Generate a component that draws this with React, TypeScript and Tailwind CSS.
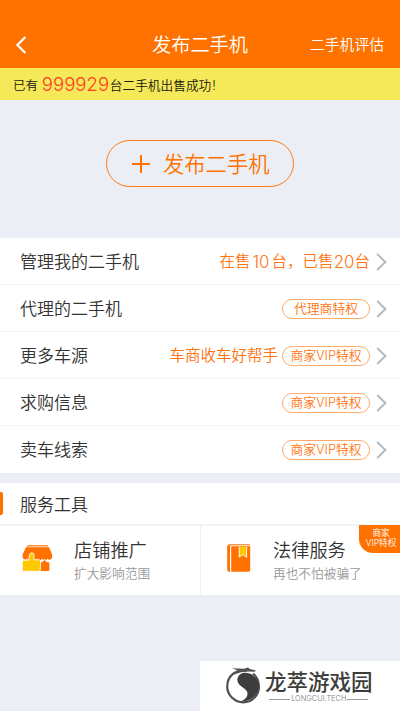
import React from "react";

const sans = "font-['Inter','Noto_Sans_CJK_SC',sans-serif]";
const cjk = "font-['Noto_Sans_CJK_SC',sans-serif]";

function Chevron() {
  return (
    <svg className="mt-px ml-[6px] h-[18px] w-[12px] shrink-0" viewBox="0 0 12 18" fill="none" stroke="#b9b9b9" strokeWidth="2">
      <path d="M1.2 1 L9.4 9 L1.2 17" />
    </svg>
  );
}

function Pill({ children }: { children: React.ReactNode }) {
  return (
    <span className="mt-px flex h-5 w-[88px] shrink-0 items-center justify-center rounded-full border border-[#ffab6b] text-[12.8px] leading-none whitespace-nowrap text-[#ff7410]">
      <span className="pt-[2px]">{children}</span>
    </span>
  );
}

function Row({ label, last, children }: { label: string; last?: boolean; children: React.ReactNode }) {
  return (
    <div className={`flex h-[47px] items-center border-b pr-3 pl-5 ${last ? "border-white" : "border-[#f5f5f7]"}`}>
      <span className="flex-1 pt-[2px] text-[17px] leading-6 text-[#333]">{label}</span>
      {children}
      <Chevron />
    </div>
  );
}

function ShopIcon() {
  return (
    <svg className="h-[27px] w-[31px]" viewBox="0 0 31 27">
      <path d="M4.6 1.4 Q5 .2 6.2 .2 H24.8 Q26 .2 26.4 1.4 Z" fill="#ff7200" />
      <path d="M4 2.2 H27 L30.2 9.5 V12.4 Q28.5 16.5 25.5 13.8 Q22.8 17 20 13.8 Q17.5 17 15.2 13.8 Q12.5 17 10 13.8 Q7.5 17 5 13.8 Q2.3 16 .6 12.4 V9.5 Z" fill="#ff7200" />
      <path d="M17.8 26 V17.6 Q20.5 17.5 22.5 15 Q24.5 17.5 27.4 17.5 V25 Q27.4 26 26.4 26 Z" fill="#ff7200" />
      <path d="M17.8 16.6 Q20.8 16.8 22.6 14.4 Q24.4 16.8 27.4 16.6" fill="none" stroke="#fff" strokeWidth=".8" />
      <path d="M.3 16.2 Q.3 15.2 1.4 15.2 H6.6 L7.4 10.4 Q8 7.8 9.8 7.8 Q12.2 8 12.2 10.6 L11.8 14.8 H17.4 Q18.7 15 18.6 16.4 L18.2 25 Q18.2 26.3 17 26.3 H1.4 Q.3 26.3 .3 25.2 Z" fill="#ffc800" stroke="#fff" strokeWidth=".9" />
    </svg>
  );
}

function BookIcon() {
  return (
    <svg className="h-[28px] w-[24px]" viewBox="0 0 24 28">
      <path d="M3 .2 H22.4 Q23.2 .3 23.2 1.3 H4 Q3 1.5 3 2.5 V27.8 Q.2 27.6 .2 25.4 V3 Q.2 .2 3 .2Z" fill="#ff7200" />
      <path d="M4.2 2.3 H23.2 V26 Q23.2 27.8 21.6 27.8 H4.2 Z" fill="#ff7200" />
      <path d="M12.2 2.8 V13.2 L15.9 10.6 L19.6 13.2 V2.8" fill="#ffc800" stroke="#fff" strokeWidth=".9" />
    </svg>
  );
}

function DragonMark() {
  return (
    <svg className="h-[38px] w-[37px] shrink-0" viewBox="0 0 37 38">
      <path d="M22 3.6 C11 1.6 2.2 9 2.2 19.5 C2.2 28.5 10 35.4 18.3 35.4 C27 35.4 34 28.5 34 19.5 C34 14.5 31.5 9 28 6.6" fill="none" stroke="#505050" strokeWidth="2.2" />
      <path d="M19 5.8 C28 5 33.8 12 33.6 19.5 C33.4 28.5 25 35 15.5 34.2 C21 32.6 23.6 28.5 22 24.6 C20.4 20.6 12.2 19 12.4 12.6 C12.6 9 15.4 6.4 19 5.8Z" fill="#3d3d3b" />
      <path d="M7 1.2 L19 1.8 L23 .4 L25 2 L31 3.4 L29.5 4.8 L23 4.6 L16 5.2 L9 7.4 L13 3.6 Z" fill="#505050" />
    </svg>
  );
}

export default function App() {
  return (
    <div className={`flex h-[711px] w-[400px] flex-col overflow-hidden bg-[#ebeff5] font-[350] ${sans}`}>
      <header className="grid h-[68px] shrink-0 grid-cols-[100px_200px_100px] items-center bg-[#ff7200] pt-[21px] text-white">
        <svg className="ml-[15px] h-[18px] w-[12px]" viewBox="0 0 12 18" fill="none" stroke="#fff" strokeWidth="2.2">
          <path d="M10.4 1 L2.4 9 L10.4 17" />
        </svg>
        <h1 className="pt-px text-center text-[19.2px] leading-7">发布二手机</h1>
        <span className="pr-4 text-right text-[14.8px] leading-6 whitespace-nowrap">二手机评估</span>
      </header>
      <div className="flex h-8 shrink-0 items-center bg-[#f5e95a] pt-[3px] pl-[13px] text-[12.7px] leading-8 text-[#202010]">
        <span className="text-[12.4px]">已有</span>
        <span className="mt-[-3px] ml-1 w-[68px] text-[18.6px] font-light whitespace-nowrap text-[#ff3a25]">999929</span>
        <span className="flex whitespace-nowrap">台二手机出售成功<span className="ml-px">!</span></span>
      </div>
      <div className="flex h-[138px] shrink-0 items-start justify-center pt-[40px]">
        <button className="flex h-[47px] w-[188px] items-center rounded-full border border-[#ff7a10] pl-[25px] text-[#ff7200]">
          <svg className="mr-[13px] h-[18px] w-[18px]" viewBox="0 0 18 18" stroke="#ff7200" strokeWidth="2">
            <path d="M9 0 V18 M0 9 H18" />
          </svg>
          <span className="pt-px text-[21.3px] leading-8 whitespace-nowrap">发布二手机</span>
        </button>
      </div>
      <section className="shrink-0 bg-white">
        <Row label="管理我的二手机">
          <span className="flex items-center pt-[2px] text-[15.5px] leading-6 text-[#ff7410]">
            在售<span className="flex w-[21px] justify-center text-[16.8px] font-light">10</span>台，已售<span className="flex w-[21px] justify-center text-[16.8px] font-light">20</span>台
          </span>
        </Row>
        <Row label="代理的二手机"><Pill>代理商特权</Pill></Row>
        <Row label="更多车源">
          <span className="mr-1 pt-[2px] text-[15.5px] leading-6 text-[#ff7410]">车商收车好帮手</span>
          <Pill>商家VIP特权</Pill>
        </Row>
        <Row label="求购信息"><Pill>商家VIP特权</Pill></Row>
        <Row label="卖车线索" last><Pill>商家VIP特权</Pill></Row>
      </section>
      <section className="mt-[10px] shrink-0 bg-white">
        <div className="flex h-[43px] items-center border-b-2 border-[#f2f3f5]">
          <span className="h-[23px] w-[3px] rounded-r-[2px] bg-[#ff7200]" />
          <h2 className="ml-[17px] pt-[2px] text-[17px] leading-6 text-[#333]">服务工具</h2>
        </div>
        <div className="grid h-[69px] grid-cols-2">
          <div className="flex pl-[22px]">
            <div className="w-[52px] pt-[19px]"><ShopIcon /></div>
            <div className="pt-[11px]">
              <div className="text-[18.2px] leading-[27px] text-[#333]">店铺推广</div>
              <div className="text-[12.7px] leading-5 text-[#999]">扩大影响范围</div>
            </div>
          </div>
          <div className="relative flex border-l border-[#eeeff2] pl-[26px]">
            <div className="w-[46px] pt-[18px]"><BookIcon /></div>
            <div className="pt-[11px]">
              <div className="text-[18.2px] leading-[27px] text-[#333]">法律服务</div>
              <div className="text-[12.7px] leading-5 text-[#999]">再也不怕被骗了</div>
            </div>
            <div className="absolute top-[-1px] right-0 h-[28px] w-[41px] rounded-bl-[14px] bg-[#ff7200] pt-[4px] pl-[3px] text-center text-[8.6px] leading-[9.5px] whitespace-nowrap text-white">
              商家<br />VIP特权
            </div>
          </div>
        </div>
      </section>
      <footer className="mt-auto ml-auto flex h-[50px] w-[200px] shrink-0 bg-white pt-[6px] pl-[25px]">
        <DragonMark />
        <div className="ml-[3px] flex flex-col items-center">
          <span className={`text-[21.5px] leading-[27px] font-medium text-[#3d3d3b] whitespace-nowrap ${cjk}`}>龙萃游戏园</span>
          <span className="mt-[1px] flex w-full items-center justify-center gap-[1px] text-[7.4px] leading-[8px] text-[#777]">
            <i className="h-px w-[21px] bg-[#999]" />LONGCUI.TECH<i className="h-px w-[21px] bg-[#999]" />
          </span>
        </div>
      </footer>
    </div>
  );
}
